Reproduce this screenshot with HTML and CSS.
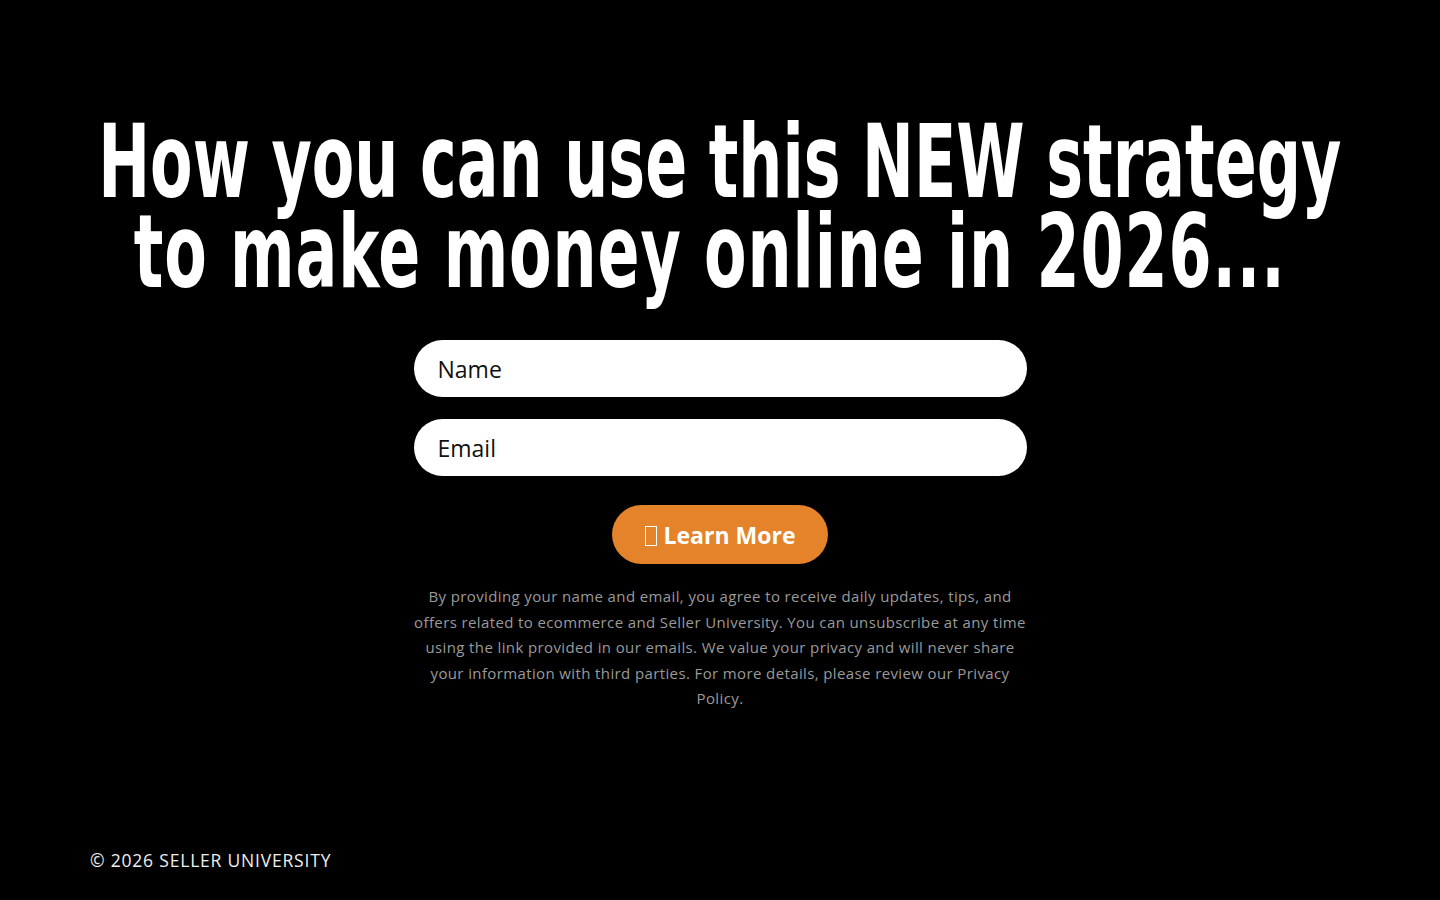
FILE: index.html
```html
<!DOCTYPE html>
<html lang="en">
<head>
<meta charset="utf-8">
<title>Seller University</title>
<link rel="stylesheet" href="styles.css">
</head>
<body>
<main class="page">
  <section class="hero">
    <h1 class="headline">How you can use this NEW strategy<br><span class="line-two">to make money online in 2026...</span></h1>
    <form class="optin" onsubmit="return false">
      <input class="field" type="text" placeholder="Name">
      <input class="field" type="email" placeholder="Email">
      <button class="cta" type="submit"><span class="tofu"></span>Learn More</button>
      <p class="disclaimer">By providing your name and email, you agree to receive daily updates, tips, and offers related to ecommerce and Seller University. You can unsubscribe at any time using the link provided in our emails. We value your privacy and will never share your information with third parties. For more details, please review our Privacy Policy.</p>
    </form>
  </section>
  <footer class="footer">© 2026 SELLER UNIVERSITY</footer>
</main>
</body>
</html>
```

FILE: styles.css
```css
* { box-sizing: border-box; }
html, body { margin: 0; padding: 0; background: #000; }
body { font-family: "Open Sans", "Lato", sans-serif; color: #fff; }
.page {
  height: 900px;
  display: flex;
  flex-direction: column;
  overflow: hidden;
}
.hero {
  flex: 1;
  display: flex;
  flex-direction: column;
  align-items: center;
  padding-top: 117px;
}
.headline {
  margin: 0;
  font-family: "DejaVu Sans", sans-serif;
  font-stretch: condensed;
  font-weight: 700;
  font-size: 102px;
  line-height: 90px;
  text-align: center;
  color: #fff;
  white-space: nowrap;
  transform: scaleX(0.675);
  transform-origin: center;
}
.line-two { letter-spacing: 1.3px; padding-right: 30px; }
.optin {
  width: 613px;
  margin-top: 43px;
  display: flex;
  flex-direction: column;
  align-items: center;
}
.field {
  width: 100%;
  height: 57px;
  border: none;
  border-radius: 29px;
  background: #fff;
  padding: 0 24px;
  font-family: "Open Sans", sans-serif;
  font-size: 23px;
  color: #111;
  margin-bottom: 22px;
  outline: none;
}
.field::placeholder { color: #111; opacity: 1; }
.cta {
  margin-top: 7px;
  width: 216px;
  height: 59px;
  border: none;
  border-radius: 30px;
  background: #e5832a;
  color: #fff;
  font-family: "Open Sans", sans-serif;
  font-weight: 700;
  font-size: 23px;
  display: flex;
  align-items: center;
  justify-content: center;
  gap: 7px;
  padding: 0;
}
.tofu {
  display: inline-block;
  width: 12px;
  height: 20px;
  border: 1.5px solid #fff;
  margin-top: 3px;
}
.disclaimer {
  margin: 20px 0 0;
  font-size: 15px;
  letter-spacing: 0.38px;
  line-height: 25.5px;
  color: #9a9a9a;
  text-align: center;
}
.footer {
  padding: 0 0 28px 90px;
  font-size: 17.5px;
  letter-spacing: 0.8px;
  color: #eee;
}
```
